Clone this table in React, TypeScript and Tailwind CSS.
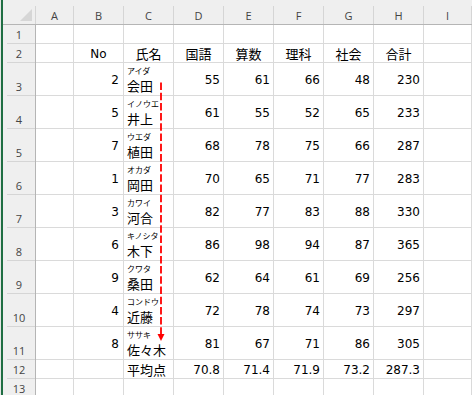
const cols = ["A", "B", "C", "D", "E", "F", "G", "H", "I"];

const subjects = ["国語", "算数", "理科", "社会", "合計"];

const students = [
  { no: 2, kana: "アイダ", name: "会田", s: [55, 61, 66, 48, 230] },
  { no: 5, kana: "イノウエ", name: "井上", s: [61, 55, 52, 65, 233] },
  { no: 7, kana: "ウエダ", name: "植田", s: [68, 78, 75, 66, 287] },
  { no: 1, kana: "オカダ", name: "岡田", s: [70, 65, 71, 77, 283] },
  { no: 3, kana: "カワイ", name: "河合", s: [82, 77, 83, 88, 330] },
  { no: 6, kana: "キノシタ", name: "木下", s: [86, 98, 94, 87, 365] },
  { no: 9, kana: "クワタ", name: "桑田", s: [62, 64, 61, 69, 256] },
  { no: 4, kana: "コンドウ", name: "近藤", s: [72, 78, 74, 73, 297] },
  { no: 8, kana: "ササキ", name: "佐々木", s: [81, 67, 71, 86, 305] },
];

const averages = ["70.8", "71.4", "71.9", "73.2", "287.3"];

const num = "font-['DejaVu_Sans','Noto_Sans_CJK_JP',sans-serif] text-[12px] leading-none";
const jp = "font-['Noto_Sans_CJK_JP',sans-serif] text-[13px] leading-none";
const cell = "border-r border-b border-[#dadada] min-w-0 overflow-visible";

function RowHead({ n }: { n: number }) {
  return (
    <div className="bg-[#efefef] border-r border-[#b5b5b5] flex flex-col">
      <div className="flex-1 flex items-end justify-center pb-[3px] font-['Open_Sans',sans-serif] text-[11px] leading-none text-[#444]">
        {n}
      </div>
      <div className="h-px ml-[4px] bg-[#d5d5d5]" />
    </div>
  );
}

function Num({ v, pr = "pr-[3px]" }: { v: string | number; pr?: string }) {
  return (
    <div className={`${cell} flex items-center justify-end pt-[2px] ${pr} ${num} text-black`}>
      {v}
    </div>
  );
}

function Empty() {
  return <div className={cell} />;
}

export default function App() {
  return (
    <div className="relative w-[472px] h-[395px] overflow-hidden bg-white flex">
      {/* 左端の枠 */}
      <div className="w-px bg-[#e6e6e6]" />
      <div className="w-[2px] bg-[#1f6e43]" />

      <div className="flex-1 grid grid-cols-[33px_38px_50px_50px_50px_50px_50px_50px_50px_1fr] grid-rows-[25px_19px_19px_repeat(9,33px)_19px_19px]">
        {/* 列見出し */}
        <div className="bg-[#efefef] border-b border-[#b5b5b5] flex flex-col">
          <div className="h-[6px]" />
          <div className="flex-1 border-r border-[#d5d5d5] flex items-end justify-end pr-[2px] pb-[2px]">
            <svg width="13" height="13" viewBox="0 0 13 13">
              <polygon points="12,0 12,12 0,12" fill="#d6d6d6" />
            </svg>
          </div>
        </div>
        {cols.map((c) => (
          <div key={c} className="bg-[#efefef] border-b border-[#b5b5b5] flex flex-col">
            <div className="h-[6px]" />
            <div className="flex-1 border-r border-[#d5d5d5] flex items-center justify-center font-['Open_Sans',sans-serif] text-[11px] leading-none text-[#444]">
              {c}
            </div>
          </div>
        ))}

        {/* 1行目 */}
        <RowHead n={1} />
        {cols.map((c) => (
          <Empty key={c} />
        ))}

        {/* 2行目 見出し */}
        <RowHead n={2} />
        <Empty />
        <div className={`${cell} flex items-center justify-center pt-[1px] ${num}`}>No</div>
        <div className={`${cell} flex items-center justify-center ${jp}`}>氏名</div>
        {subjects.map((s) => (
          <div key={s} className={`${cell} flex items-center justify-center ${jp}`}>
            {s}
          </div>
        ))}
        <Empty />

        {/* データ */}
        {students.map((st, i) => (
          <div key={st.no} className="contents">
            <RowHead n={i + 3} />
            <Empty />
            <Num v={st.no} pr="pr-[4px]" />
            <div className={`${cell} flex flex-col justify-end pl-[3px] pb-[3px]`}>
              <div className="font-['Noto_Sans_CJK_JP',sans-serif] text-[8px] leading-none mb-[4px] whitespace-nowrap">
                {st.kana}
              </div>
              <div className={`${jp} whitespace-nowrap`}>{st.name}</div>
            </div>
            {st.s.map((v, j) => (
              <Num key={j} v={v} />
            ))}
            <Empty />
          </div>
        ))}

        {/* 平均点 */}
        <RowHead n={12} />
        <Empty />
        <Empty />
        <div className={`${cell} flex items-center pl-[3px] ${jp} whitespace-nowrap`}>平均点</div>
        {averages.map((v) => (
          <Num key={v} v={v} />
        ))}
        <Empty />

        {/* 13行目 */}
        <RowHead n={13} />
        {cols.map((c) => (
          <Empty key={c} />
        ))}
      </div>

      {/* 赤い点線の矢印 */}
      <svg className="absolute left-0 top-0 pointer-events-none" width="472" height="395">
        <line x1="161" y1="82.5" x2="161" y2="334" stroke="#ff0000" strokeWidth="1.8" strokeDasharray="7.5 2.7" />
        <polygon points="157.5,334 164.5,334 161,341" fill="#ff0000" />
      </svg>
    </div>
  );
}
